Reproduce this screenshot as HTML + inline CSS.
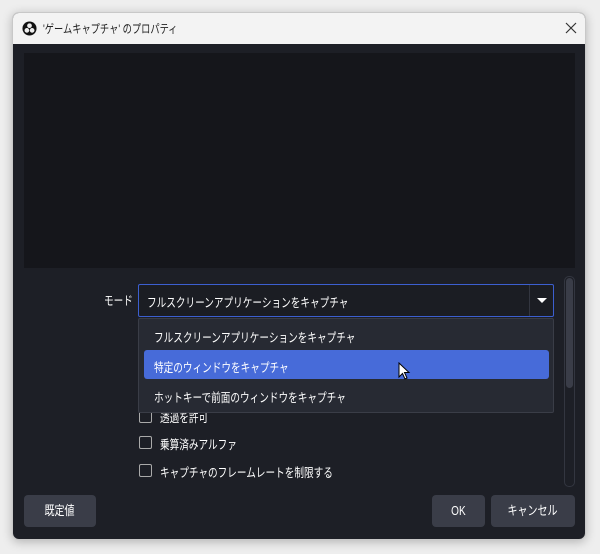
<!DOCTYPE html><html><head><meta charset="utf-8"><style>
body{margin:0;width:600px;height:554px;background:#eeeeee;font-family:"Liberation Sans","Noto Sans CJK JP",sans-serif;position:relative;overflow:hidden}
.win{position:absolute;left:12px;top:12px;width:574px;height:528px;border-radius:7px;overflow:hidden;box-shadow:0 2px 10px rgba(0,0,0,.25);background:#1d1f26;border:1px solid #c8c8c8;box-sizing:border-box}
.tb{position:absolute;left:0;top:0;right:0;height:31px;background:#f3f3f3;color:#222;font-size:12px}
.a{position:absolute;color:#fff;font-size:13px;transform:scaleX(.77);transform-origin:0 0;white-space:nowrap}
.box{position:absolute;box-sizing:border-box}
.cb{position:absolute;width:13px;height:13px;border:1px solid #aaa;border-radius:2px;box-sizing:border-box;left:139px}
.btn{position:absolute;background:#3a3d48;border-radius:4px;color:#fff;font-size:13px;text-align:center;line-height:32px;height:32px;top:495px}
.btn span{display:inline-block;transform:scaleX(.77)}
</style></head><body>
<div class="win">
<div class="tb">
<svg style="position:absolute;left:9px;top:8px" width="15" height="15" viewBox="0 0 16 16"><circle cx="8" cy="8" r="7.5" fill="#111"/><circle cx="8" cy="5" r="2.5" fill="#eee"/><circle cx="5.2" cy="10" r="2.5" fill="#eee"/><circle cx="10.8" cy="10" r="2.5" fill="#eee"/></svg>
<span style="position:absolute;left:30px;top:7px;transform:scaleX(.77);transform-origin:0 0;white-space:nowrap">'ゲームキャプチャ' のプロパティ</span>
<svg style="position:absolute;left:552px;top:9px" width="12" height="12"><path d="M1 1L11 11M11 1L1 11" stroke="#333" stroke-width="1.2"/></svg>
</div>
</div>
<div class="box" style="left:24px;top:53px;width:551px;height:215px;background:#15161b"></div>
<div class="a" style="left:104px;top:290px;font-size:12.5px">モード</div>
<div class="box" style="left:138px;top:284px;width:416px;height:33px;border:1px solid #3c5fd0;background:#1b1d23;border-radius:2px"></div>
<div class="box" style="left:529px;top:285px;width:1px;height:31px;background:#333640"></div>
<svg style="position:absolute;left:536px;top:297px" width="12" height="7"><path d="M1 1H11L6 6Z" fill="#fff"/></svg>
<div class="a" style="left:147px;top:292px;font-size:12.5px">フルスクリーンアプリケーションをキャプチャ</div>
<div class="cb" style="top:410px"></div><div class="a" style="left:160px;top:407px;font-size:12.5px">透過を許可</div>
<div class="cb" style="top:436px"></div><div class="a" style="left:160px;top:434px;font-size:12.5px">乗算済みアルファ</div>
<div class="cb" style="top:464px"></div><div class="a" style="left:160px;top:462px;font-size:12.5px">キャプチャのフレームレートを制限する</div>
<div class="box" style="left:138px;top:318px;width:416px;height:95px;background:#272a33;border:1px solid #3a3d47;border-radius:2px"></div>
<div class="a" style="left:154px;top:327px;font-size:12.5px">フルスクリーンアプリケーションをキャプチャ</div>
<div class="box" style="left:144px;top:350px;width:405px;height:29px;background:#476bd9;border-radius:3px"></div>
<div class="a" style="left:154px;top:357px;font-size:12.5px">特定のウィンドウをキャプチャ</div>
<div class="a" style="left:154px;top:387px;font-size:12.5px">ホットキーで前面のウィンドウをキャプチャ</div>
<svg style="position:absolute;left:398px;top:362px" width="14" height="20"><path d="M1 1V15L4.5 11.5L7 17L9 16L6.5 10.5H11Z" fill="#fff" stroke="#000"/></svg>
<div class="box" style="left:564px;top:276px;width:11px;height:211px;border:1px solid #333640;border-radius:5px"></div>
<div class="box" style="left:566px;top:278px;width:7px;height:110px;background:#3a3d48;border-radius:4px"></div>
<div class="btn" style="left:24px;width:72px"><span>既定値</span></div>
<div class="btn" style="left:432px;width:53px"><span>OK</span></div>
<div class="btn" style="left:491px;width:84px"><span>キャンセル</span></div>
</body></html>
